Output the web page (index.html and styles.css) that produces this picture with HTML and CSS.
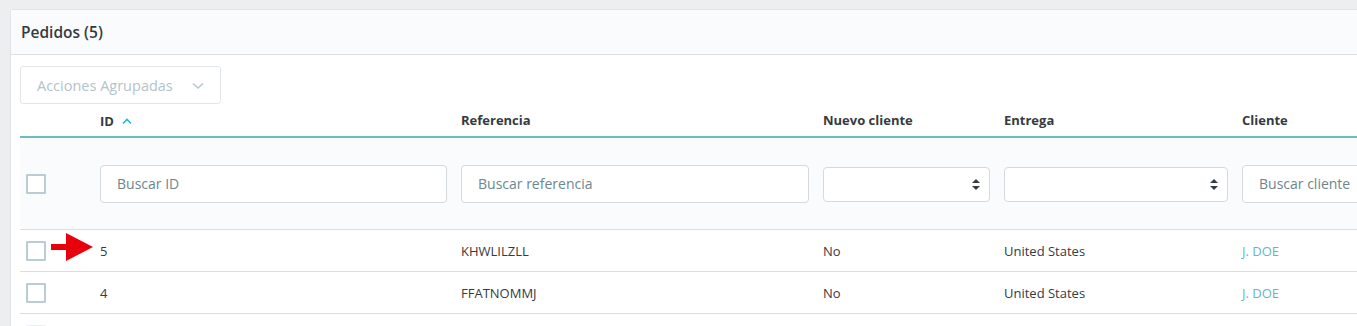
FILE: index.html
```html
<!DOCTYPE html>
<html lang="es">
<head>
    <meta charset="UTF-8">
    <meta name="viewport" content="width=device-width, initial-scale=1.0">
    <title>Pedidos</title>
    <link rel="stylesheet" href="styles.css">
</head>
<body>
    <div class="card">
        <div class="card-header">Pedidos (5)</div>
        <div class="card-body">
            <button class="bulk-btn">
                Acciones Agrupadas
                <svg class="chevron" width="12" height="8" viewBox="0 0 12 8"><path d="M1 1.5 L6 6 L11 1.5" fill="none" stroke="#b7c6cb" stroke-width="1.5"/></svg>
            </button>

            <table class="grid">
                <colgroup>
                    <col style="width: 73px">
                    <col style="width: 361px">
                    <col style="width: 362px">
                    <col style="width: 181px">
                    <col style="width: 238px">
                    <col style="width: 240px">
                </colgroup>
                <thead>
                    <tr class="head-row">
                        <th></th>
                        <th>ID <span class="sort"><svg width="10" height="7" viewBox="0 0 10 7"><path d="M1 5.5 L5 1.5 L9 5.5" fill="none" stroke="#25b9d7" stroke-width="1.6"/></svg></span></th>
                        <th>Referencia</th>
                        <th>Nuevo cliente</th>
                        <th>Entrega</th>
                        <th>Cliente</th>
                    </tr>
                    <tr class="filter-row">
                        <td><span class="check"></span></td>
                        <td><input type="text" placeholder="Buscar ID"></td>
                        <td><input type="text" placeholder="Buscar referencia"></td>
                        <td>
                            <div class="select">
                                <svg class="updown" width="8" height="11" viewBox="0 0 8 11"><path d="M4 0 L8 4 L0 4 Z M0 7 L8 7 L4 11 Z" fill="#363a41"/></svg>
                            </div>
                        </td>
                        <td>
                            <div class="select">
                                <svg class="updown" width="8" height="11" viewBox="0 0 8 11"><path d="M4 0 L8 4 L0 4 Z M0 7 L8 7 L4 11 Z" fill="#363a41"/></svg>
                            </div>
                        </td>
                        <td><input type="text" placeholder="Buscar cliente"></td>
                    </tr>
                </thead>
                <tbody>
                    <tr>
                        <td class="check-cell">
                            <span class="check"></span>
                            <svg class="pointer" width="43" height="28" viewBox="0 0 43 28"><rect x="0" y="11" width="17" height="6" fill="#e8000b"/><polygon points="15,0 42,14 15,28" fill="#e8000b"/></svg>
                        </td>
                        <td>5</td>
                        <td>KHWLILZLL</td>
                        <td>No</td>
                        <td>United States</td>
                        <td><a class="customer" href="#">J. DOE</a></td>
                    </tr>
                    <tr>
                        <td class="check-cell"><span class="check"></span></td>
                        <td>4</td>
                        <td>FFATNOMMJ</td>
                        <td>No</td>
                        <td>United States</td>
                        <td><a class="customer" href="#">J. DOE</a></td>
                    </tr>
                    <tr>
                        <td class="check-cell"><span class="check faint"></span></td>
                        <td></td>
                        <td></td>
                        <td></td>
                        <td></td>
                        <td></td>
                    </tr>
                </tbody>
            </table>
        </div>
    </div>
</body>
</html>
```

FILE: styles.css
```css
body {
    margin: 0;
    padding: 9px 0 0 10px;
    background-color: #eceeef;
    font-family: "Open Sans", "Liberation Sans", sans-serif;
    color: #363a41;
    overflow: hidden;
}

.card {
    width: 1600px;
    background-color: #fff;
    border: 1px solid #dfe3e5;
    border-radius: 3px;
}

.card-header {
    height: 44px;
    line-height: 44px;
    padding-left: 10px;
    background-color: #fafbfc;
    border-bottom: 1px solid #dbe0e2;
    font-size: 15.5px;
    font-weight: 600;
}

.card-body {
    padding: 11px 0 0 9px;
}

.bulk-btn {
    display: flex;
    align-items: center;
    height: 38px;
    width: 201px;
    padding: 0 0 0 16px;
    background-color: #fff;
    border: 1px solid #e3e7e9;
    border-radius: 3px;
    font-family: inherit;
    font-size: 14.5px;
    color: #b3c3c9;
    cursor: default;
}

.chevron {
    margin-left: 19px;
    margin-top: 2px;
}

.grid {
    table-layout: fixed;
    border-collapse: collapse;
    width: 1375px;
    font-size: 13px;
}

.grid th,
.grid td {
    padding: 0 7px;
    text-align: left;
}

.head-row th {
    height: 32px;
    vertical-align: middle;
    font-size: 13px;
    font-weight: 700;
    border-bottom: 2px solid #6ebcc0;
}

.sort {
    display: inline-block;
    margin-left: 5px;
    vertical-align: 1px;
}

.filter-row td {
    height: 91px;
    background-color: #fafbfc;
    border-bottom: 1px solid #d9dee1;
}

.filter-row input {
    box-sizing: border-box;
    width: 100%;
    height: 38px;
    padding: 0 16px;
    border: 1px solid #d4dadd;
    border-radius: 4px;
    font-family: inherit;
    font-size: 14px;
    color: #363a41;
    background-color: #fff;
}

.filter-row input::placeholder {
    color: #6c868e;
}

.select {
    position: relative;
    box-sizing: border-box;
    height: 35px;
    margin-top: 2px;
    border: 1px solid #d4dadd;
    border-radius: 4px;
    background-color: #fff;
}

.updown {
    position: absolute;
    right: 9px;
    top: 11px;
}

.check {
    display: inline-block;
    box-sizing: border-box;
    width: 20px;
    height: 20px;
    margin-left: -1px;
    border: 2px solid #bbcdd2;
    border-radius: 1px;
    background-color: #fff;
    vertical-align: middle;
}

.check.faint {
    border-color: #e6eef0;
}

tbody td {
    height: 41px;
    border-bottom: 1px solid #d9dee1;
    font-size: 13px;
    vertical-align: middle;
}

.check-cell {
    position: relative;
}

.pointer {
    position: absolute;
    left: 31px;
    top: 3px;
}

.customer {
    color: #5cb8cc;
    text-decoration: none;
}
```
